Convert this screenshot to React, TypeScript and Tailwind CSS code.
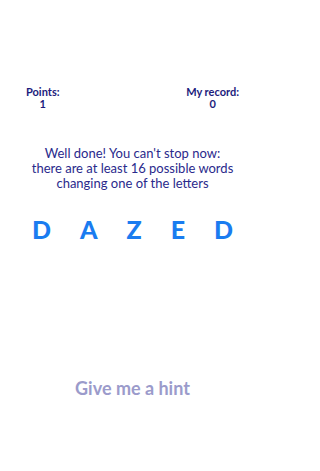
export default function App() {
	return (
		<main
			className="w-[265px] h-[471px] bg-white flex flex-col"
			style={{ fontFamily: "Lato, 'Open Sans', sans-serif" }}
		>
			<header className="flex justify-between px-[26px] pt-[86px] text-[11px] font-bold leading-[12px] text-[#1c1c7c]">
				<div className="flex flex-col items-center">
					<span>Points:</span>
					<span>1</span>
				</div>
				<div className="flex flex-col items-center">
					<span>My record:</span>
					<span>0</span>
				</div>
			</header>
			<p className="mt-[36px] text-center text-[13px] leading-[15px] text-[#2a2a8c]">
				Well done! You can't stop now:
				<br />
				there are at least 16 possible words
				<br />
				changing one of the letters
			</p>
			<div className="mt-[24px] flex justify-between px-[32px] text-[25px] font-black leading-[28px] text-[#1a7cf0]">
				<span>D</span>
				<span>A</span>
				<span>Z</span>
				<span>E</span>
				<span>D</span>
			</div>
			<button className="mt-auto mb-[72px] self-center text-[18px] leading-[22px] font-bold text-[#9b9bcb]">
				Give me a hint
			</button>
		</main>
	)
}
